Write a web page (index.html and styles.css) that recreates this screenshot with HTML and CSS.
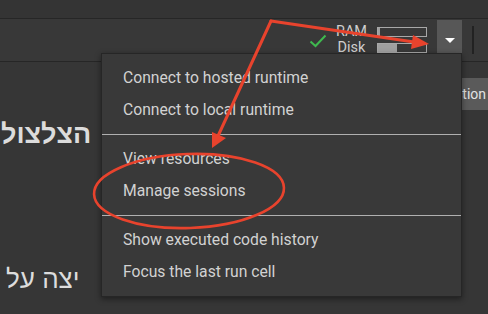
FILE: index.html
```html
<!DOCTYPE html>
<html lang="en">
<head>
<meta charset="utf-8">
<title>Runtime menu</title>
<link rel="stylesheet" href="styles.css">
</head>
<body>
<div class="page">
  <div class="topbar"></div>
  <div class="toolbar">
    <svg class="check" width="18" height="14" viewBox="0 0 18 14"><path d="M1.5 7.5 L6.5 12 L16.5 1.5" fill="none" stroke="#3fb94f" stroke-width="2"/></svg>
    <div class="labels">
      <span>RAM</span>
      <span>Disk</span>
    </div>
    <div class="bars">
      <div class="bar"><div class="fill" style="width:2px"></div></div>
      <div class="bar"><div class="fill" style="width:19px"></div></div>
    </div>
    <button class="drop"><span class="tri"></span></button>
    <div class="vsep"></div>
  </div>
  <div class="content">
    <div class="text-col">
      <h1 class="he-title"><span dir="rtl" lang="he">הצלצול</span></h1>
      <p class="he-line"><span dir="rtl" lang="he">יצה על</span></p>
    </div>
    <div class="side">
      <div class="section-btn">Section</div>
    </div>
  </div>

  <div class="menu">
    <div class="item">Connect to hosted runtime</div>
    <div class="item">Connect to local runtime</div>
    <div class="sep"></div>
    <div class="item">View resources</div>
    <div class="item">Manage sessions</div>
    <div class="sep"></div>
    <div class="item">Show executed code history</div>
    <div class="item">Focus the last run cell</div>
  </div>

  <svg class="annot" width="488" height="314" viewBox="0 0 488 314">
    <g stroke="#e8432d" stroke-width="3" fill="none" stroke-linecap="round">
      <path d="M271 21 L414 42"/>
      <path d="M271 21 L218 136"/>
      <ellipse cx="189" cy="191" rx="95" ry="37" transform="rotate(-2 189 191)" stroke-width="2.6"/>
    </g>
    <g fill="#e8432d">
      <polygon points="429,44 411,49 413,35"/>
      <polygon points="212,148 212,132 226,138"/>
    </g>
  </svg>
</div>
</body>
</html>
```

FILE: styles.css
```css
* { box-sizing: border-box; }

html, body {
  margin: 0;
  padding: 0;
  background: #363636;
  overflow: hidden;
}

.page {
  position: relative;
  width: 488px;
  height: 314px;
  overflow: hidden;
  font-family: Roboto, "Liberation Sans", sans-serif;
  color: #d4d4d4;
}

.topbar {
  height: 19px;
  background: #343434;
  border-bottom: 1px solid #262626;
}

.toolbar {
  height: 43px;
  background: #383838;
  border-bottom: 1px solid #262626;
  display: flex;
  align-items: center;
  justify-content: flex-end;
  padding-right: 14px;
}

.check {
  margin-right: 9px;
  margin-top: 2px;
}

.labels {
  display: flex;
  flex-direction: column;
  align-items: center;
  font-size: 14.5px;
  line-height: 16px;
  color: #cfcfcf;
  width: 31px;
  margin-right: 10px;
}

.bars {
  display: flex;
  flex-direction: column;
  gap: 6px;
  margin-right: 10px;
}

.bar {
  width: 50px;
  height: 10px;
  border: 1px solid #a8a8a8;
  background: #383838;
}

.bar .fill {
  height: 100%;
  background: #a0a0a0;
}

.drop {
  width: 25px;
  height: 40px;
  border: none;
  padding: 0;
  background: #575757;
  display: flex;
  align-items: center;
  justify-content: center;
  margin-right: 10px;
}

.tri {
  width: 0;
  height: 0;
  border-left: 5px solid transparent;
  border-right: 5px solid transparent;
  border-top: 5px solid #ffffff;
}

.vsep {
  width: 2px;
  height: 28px;
  background: #222222;
}

.content {
  display: flex;
  justify-content: space-between;
}

.text-col {
  flex: none;
  width: 101px;
  font-family: "Liberation Sans", "DejaVu Sans", sans-serif;
  color: #dcdcdc;
}

.he-title {
  margin: 55px 0 0 0;
  padding-left: 1px;
  font-size: 27px;
  line-height: 34px;
  font-weight: bold;
  white-space: nowrap;
}

.he-line {
  margin: 112px 0 0 0;
  padding-left: 6px;
  font-size: 26px;
  line-height: 32px;
  white-space: nowrap;
}

.side {
  padding-top: 16px;
}

.section-btn {
  height: 32px;
  line-height: 32px;
  background: #5a5a5a;
  color: #e2e2e2;
  font-size: 14px;
  padding: 0 2px 0 10px;
}

.menu {
  position: absolute;
  left: 101px;
  top: 53px;
  width: 361px;
  height: 244px;
  background: #393939;
  border: 1px solid #262626;
  box-shadow: 0 2px 6px rgba(0, 0, 0, 0.45);
  padding: 8px 0 8px 0;
  font-size: 15.7px;
  color: #d2d2d2;
}

.item {
  height: 32px;
  line-height: 32px;
  padding-left: 21px;
  white-space: nowrap;
}

.sep {
  height: 1px;
  background: #b0b0b0;
  margin: 8px 0;
}

.annot {
  position: absolute;
  left: 0;
  top: 0;
  pointer-events: none;
}
```
